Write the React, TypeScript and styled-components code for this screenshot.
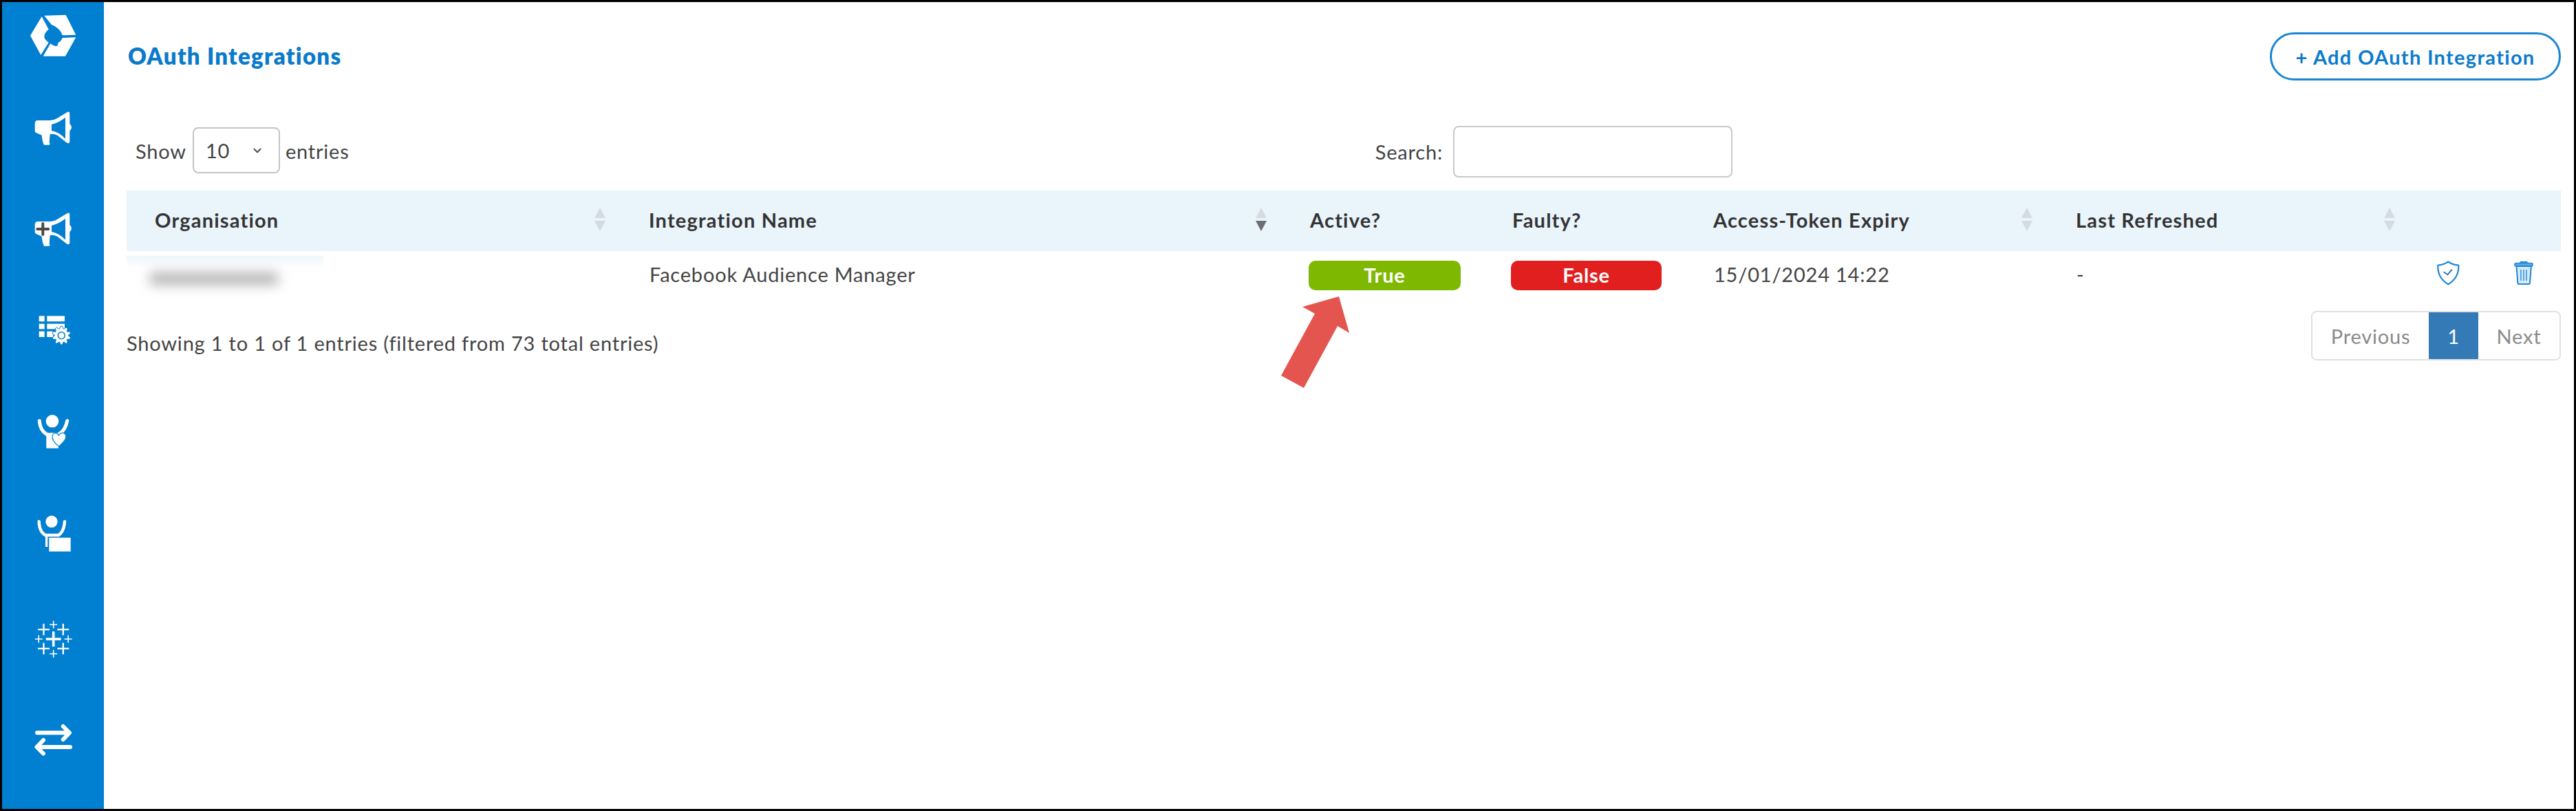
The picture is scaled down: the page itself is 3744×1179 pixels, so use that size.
import React, { FC } from "react";
import styled, { createGlobalStyle } from "styled-components";
import { ChevronDown } from "lucide-react";

const GlobalStyle = createGlobalStyle`
  html, body {
    margin: 0;
    padding: 0;
    background: #fff;
  }
  body {
    font-family: "Lato", "Liberation Sans", sans-serif;
    font-size: 29px;
    letter-spacing: 0.8px;
    color: #444;
  }
`;

const Frame = styled.div`
  position: relative;
  box-sizing: border-box;
  width: 3744px;
  height: 1179px;
  border: 3px solid #000;
  display: flex;
  background: #fff;
  overflow: hidden;
`;
const Sidebar = styled.aside`
  flex: 0 0 148px;
  background: #017fd0;
  padding-left: 24px;
  box-sizing: border-box;
`;
const LogoBox = styled.div`
  height: 98px;
  display: flex;
  align-items: center;
`;
const Nav = styled.nav`
  margin-top: 11px;
  display: flex;
  flex-direction: column;
`;
const NavItem = styled.a`
  display: flex;
  align-items: center;
  height: 148px;
`;
const Main = styled.main`
  flex: 1;
  min-width: 0;
  padding: 44px 19px 0 33px;
`;
const Header = styled.header`
  display: flex;
  align-items: center;
  justify-content: space-between;
  height: 70px;
`;
const Title = styled.h1`
  margin: 0 0 2px 2px;
  font-size: 33px;
  font-weight: 800;
  letter-spacing: 1.3px;
  color: #0a7bcb;
`;
const AddButton = styled.button`
  box-sizing: border-box;
  width: 423px;
  height: 70px;
  border: 3px solid #1a86d3;
  border-radius: 35px;
  background: #fff;
  color: #0a7bcb;
  font: 700 29px "Lato", "Liberation Sans", sans-serif;
  letter-spacing: 1.3px;
`;
const Toolbar = styled.div`
  display: flex;
  justify-content: space-between;
  align-items: center;
  height: 75px;
  margin: 66px 0 19px;
  padding: 0 1204px 0 13px;
`;
const LengthLabel = styled.label`
  display: flex;
  align-items: center;
  gap: 8px;
  padding-bottom: 3px;
`;
const LengthSelect = styled.div`
  box-sizing: border-box;
  width: 127px;
  height: 67px;
  margin: 0 0 1px 1px;
  border: 2px solid #c4c4c4;
  border-radius: 8px;
  display: flex;
  align-items: center;
  justify-content: space-between;
  padding: 0 22px 0 17px;
  color: #444;
`;
const SearchLabel = styled.label`
  display: flex;
  align-items: center;
  gap: 15px;
`;
const SearchInput = styled.input`
  box-sizing: border-box;
  width: 406px;
  height: 75px;
  border: 2px solid #c9c9c9;
  border-radius: 8px;
  background: #fff;
`;
const Table = styled.table`
  width: 3538px;
  table-layout: fixed;
  border-collapse: collapse;
`;
const Col = styled.col<{ $w: number }>`
  width: ${({ $w }) => $w}px;
`;
const HeadRow = styled.tr`
  height: 88px;
  background: #e9f4fb;
`;
const Th = styled.th`
  padding: 0 22px 4px 41px;
  font-weight: 700;
  letter-spacing: 1.2px;
  text-align: left;
  color: #333;
`;
const ThInner = styled.div`
  display: flex;
  align-items: center;
  justify-content: space-between;
`;
const Sort = styled.span`
  display: flex;
  flex-direction: column;
  gap: 4px;
`;
const Tri = styled.i<{ $up?: boolean; $active?: boolean }>`
  display: block;
  width: 0;
  height: 0;
  border-left: 8px solid transparent;
  border-right: 8px solid transparent;
  ${({ $up, $active }) =>
    `border-${$up ? "bottom" : "top"}: 15px solid ${$active ? "#6e6f70" : "#d4dbe2"};`}
`;
const BodyRow = styled.tr`
  height: 70px;
`;
const Td = styled.td`
  padding: 0 0 4px 42px;
  color: #444;
`;
const OrgCell = styled(Td)`
  background-image: linear-gradient(#edf6fc, #fff);
  background-repeat: no-repeat;
  background-size: 286px 18px;
  background-position: 0 7px;
`;
const Blurred = styled.span`
  display: block;
  width: 186px;
  height: 18px;
  margin-top: 13px;
  margin-left: -8px;
  background: #b3b3b3;
  filter: blur(9px);
`;
const BadgeCell = styled.td`
  padding: 0 34px 0 39px;
`;
const Badge = styled.div<{ $color: string }>`
  height: 43px;
  padding-bottom: 2px;
  box-sizing: border-box;
  border-radius: 10px;
  background: ${({ $color }) => $color};
  color: #fff;
  font-weight: 700;
  display: flex;
  align-items: center;
  justify-content: center;
`;
const ActionCell = styled.td`
  text-align: center;
  padding: 0;
`;
const Footer = styled.div`
  display: flex;
  justify-content: space-between;
  align-items: center;
  margin-top: 17px;
`;
const FooterInfo = styled.span`
  padding-top: 20px;
`;
const Pager = styled.div`
  box-sizing: border-box;
  height: 72px;
  display: flex;
  border: 2px solid #e0e0e0;
  border-radius: 8px;
  overflow: hidden;
`;
const PageLink = styled.a<{ $w: number; $current?: boolean }>`
  width: ${({ $w }) => $w}px;
  margin: ${({ $current }) => ($current ? "-2px 0" : "0")};
  display: flex;
  align-items: center;
  justify-content: center;
  background: ${({ $current }) => ($current ? "#337ab7" : "#fff")};
  color: ${({ $current }) => ($current ? "#fff" : "#8a8a8a")};
`;
const ArrowMark = styled.svg`
  position: absolute;
  left: 1856px;
  top: 428px;
`;

const WHITE = "#fff";
const BLUE = "#017fd0";
const MEGAPHONE =
  "M50.7 180Q50.7 175 55 175L71.7 175Q78 175 83.3 171.7L97 163.5Q101.3 161 101.3 165L101.3 180Q104 182 104 185Q104 188 101.3 190L101.3 205Q101.3 210 97 207.5L83.3 196.7Q78 194 72.7 195L71.7 206.7Q73.5 210.7 71 210.7L64 210.7Q61.5 206 60.7 196.7L55 194Q50.7 193 50.7 190ZM75 181L75 190Q86 192 95 201.7L95 170.7Q86 178 75 181Z";

const gear = (cx: number, cy: number, R: number, r: number, n: number) => {
  const pts: string[] = [];
  for (let i = 0; i < n; i++) {
    const a = (i / n) * Math.PI * 2;
    const w = Math.PI / n / 2.2;
    [
      [r, a - 2 * w],
      [R, a - w * 0.7],
      [R, a + w * 0.7],
      [r, a + 2 * w],
    ].forEach(([d, t]) => {
      pts.push(`${(cx + d * Math.sin(t)).toFixed(1)},${(cy - d * Math.cos(t)).toFixed(1)}`);
    });
  }
  return pts.join(" ");
};

const Icon: FC<{ y: number; children: React.ReactNode }> = ({ y, children }) => (
  <svg width="100" height="100" viewBox={`27 ${y} 100 100`} fill={WHITE}>
    {children}
  </svg>
);

const Logo = () => (
  <Icon y={2}>
    <path d="M64.3 22.7L95.7 21.7L110.3 50.7L90.7 51.3Q88 44 83.3 40.7Q79 37 75 36Z" />
    <path d="M60.7 24L44 51.7L59.3 80L70.7 61.7Q65 58 64.3 53.3Q65 47 70.7 42.7Z" />
    <path d="M110.3 54.3L95 81.7L62.7 81.7L73.3 63.3Q79 68 83.3 66.7Q84 64 85 61.7Q89 60 90.7 55Z" />
  </Icon>
);

const Megaphone = () => (
  <Icon y={136}>
    <path d={MEGAPHONE} fillRule="evenodd" />
  </Icon>
);

const MegaphonePlus = () => (
  <Icon y={284}>
    <path d={MEGAPHONE} fillRule="evenodd" transform="translate(0 147)" />
    <path d="M62.3 325V341M54.3 333H70.3" stroke="#4a4a4a" strokeWidth="4" strokeLinecap="round" />
  </Icon>
);

const TableGear = () => (
  <Icon y={432}>
    <rect x="56.7" y="459.3" width="8" height="8" />
    <rect x="68.3" y="459.3" width="25.7" height="8" />
    <rect x="56.7" y="470.7" width="8" height="7.7" />
    <rect x="68.3" y="470.7" width="25.7" height="7.7" />
    <rect x="56.7" y="481.7" width="8" height="8.3" />
    <rect x="68.3" y="481.7" width="9" height="8.3" />
    <polygon points={gear(89.3, 487.7, 13.5, 10, 10)} stroke={BLUE} strokeWidth="1" />
    <circle cx="89.3" cy="487.7" r="5" fill={WHITE} stroke={BLUE} strokeWidth="1.6" />
  </Icon>
);

const PersonHeart = () => (
  <Icon y={580}>
    <circle cx="76" cy="612.3" r="9.3" />
    <path d="M57.3 611.7Q58 626 68.3 631.7H85Q95 626 97.7 611.7" fill="none" stroke={WHITE} strokeWidth="5" strokeLinecap="round" />
    <path d="M67.3 630H85V651.7H67.3Z" />
    <path
      d="M85.5 649C78 643 75.5 638 76 634C77 629 83 628 85.5 633C88 628 95 628 96 634C96.5 640 90 645 85.5 649Z"
      stroke={BLUE}
      strokeWidth="1.2"
    />
  </Icon>
);

const PersonBox = () => (
  <Icon y={728}>
    <circle cx="75" cy="758.3" r="8.7" />
    <path d="M56.7 758.3Q57 773 66 778H85Q93 773 94 758.3" fill="none" stroke={WHITE} strokeWidth="4.5" strokeLinecap="round" />
    <rect x="66" y="776" width="3.3" height="19" />
    <rect x="69" y="776" width="16" height="4" />
    <rect x="71.3" y="781.7" width="31.4" height="20" />
  </Icon>
);

const plus = (x: number, y: number, h: number) => `M${x - h} ${y}H${x + h}M${x} ${y - h}V${y + h}`;

const TableauMark = () => (
  <Icon y={876}>
    <g stroke={WHITE} fill="none">
      <path d={plus(77.7, 929, 11)} strokeWidth="3.6" />
      <path
        d={[plus(63.5, 915.2, 8.4), plus(91.8, 915.2, 8.4), plus(63.5, 942.8, 8.4), plus(91.8, 942.8, 8.4)].join("")}
        strokeWidth="2.3"
      />
      <path
        d={[plus(77.7, 908, 5.5), plus(56.3, 929, 5.5), plus(99.1, 929, 5.5), plus(77.7, 950.5, 5.5)].join("")}
        strokeWidth="1.6"
      />
    </g>
  </Icon>
);

const Transfer = () => (
  <Icon y={1024}>
    <path d="M54 1065.3H100M91.8 1056L101 1065.3L91.8 1075" fill="none" stroke={WHITE} strokeWidth="6" strokeLinecap="round" strokeLinejoin="round" />
    <path d="M102 1086H56M63 1076L53.5 1086L63 1095.5" fill="none" stroke={WHITE} strokeWidth="6" strokeLinecap="round" strokeLinejoin="round" />
  </Icon>
);

const ShieldCheck = () => (
  <svg width="40" height="44" viewBox="3539 380 40 44" fill="none" stroke="#2288d6" strokeLinecap="round" strokeLinejoin="round">
    <path d="M3559.3 385.5Q3566 390 3574.3 390.7Q3575 409 3559.3 418.3Q3543.5 409 3544.3 390.7Q3552.5 390 3559.3 385.5Z" strokeWidth="2.2" />
    <path d="M3553.3 400.7L3558.3 404.3L3564.3 397.3" strokeWidth="2" stroke="#3a6ea5" />
  </svg>
);

const TrashCan = () => (
  <svg width="40" height="44" viewBox="3647 380 40 44" fill="none" stroke="#2288d6" strokeLinejoin="round">
    <rect x="3662" y="385.5" width="10" height="3" fill="#2288d6" />
    <rect x="3654" y="387.5" width="26" height="4.4" rx="2" fill="#5aaae6" strokeWidth="1.6" />
    <path d="M3656.5 392H3677.8L3676 416.5Q3675.8 418 3674 418H3660.3Q3658.5 418 3658.3 416.5Z" fill="#d6eafa" strokeWidth="2" />
    <path d="M3663 397V413M3667 397V413M3671 397V413" stroke="#2288d6" strokeWidth="1.4" />
  </svg>
);

const SortMark: FC<{ active?: boolean }> = ({ active }) => (
  <Sort>
    <Tri $up />
    <Tri $active={active} />
  </Sort>
);

export default function App() {
  return (
    <Frame>
      <GlobalStyle />
      <Sidebar>
        <LogoBox>
          <Logo />
        </LogoBox>
        <Nav>
          <NavItem><Megaphone /></NavItem>
          <NavItem><MegaphonePlus /></NavItem>
          <NavItem><TableGear /></NavItem>
          <NavItem><PersonHeart /></NavItem>
          <NavItem><PersonBox /></NavItem>
          <NavItem><TableauMark /></NavItem>
          <NavItem><Transfer /></NavItem>
        </Nav>
      </Sidebar>
      <Main>
        <Header>
          <Title>OAuth Integrations</Title>
          <AddButton>+ Add OAuth Integration</AddButton>
        </Header>
        <Toolbar>
          <LengthLabel>
            Show
            <LengthSelect>
              10
              <ChevronDown size={18} strokeWidth={3} color="#555" />
            </LengthSelect>
            entries
          </LengthLabel>
          <SearchLabel>
            Search:
            <SearchInput type="search" />
          </SearchLabel>
        </Toolbar>
        <Table>
          <colgroup>
            <Col $w={718} />
            <Col $w={961} />
            <Col $w={294} />
            <Col $w={292} />
            <Col $w={527} />
            <Col $w={527} />
            <Col $w={110} />
            <Col $w={109} />
          </colgroup>
          <thead>
            <HeadRow>
              <Th><ThInner>Organisation<SortMark /></ThInner></Th>
              <Th><ThInner>Integration Name<SortMark active /></ThInner></Th>
              <Th>Active?</Th>
              <Th>Faulty?</Th>
              <Th><ThInner>Access-Token Expiry<SortMark /></ThInner></Th>
              <Th><ThInner>Last Refreshed<SortMark /></ThInner></Th>
              <Th />
              <Th />
            </HeadRow>
          </thead>
          <tbody>
            <BodyRow>
              <OrgCell><Blurred /></OrgCell>
              <Td>Facebook Audience Manager</Td>
              <BadgeCell><Badge $color="#7fb800">True</Badge></BadgeCell>
              <BadgeCell><Badge $color="#e11f1f">False</Badge></BadgeCell>
              <Td>15/01/2024 14:22</Td>
              <Td>-</Td>
              <ActionCell><ShieldCheck /></ActionCell>
              <ActionCell><TrashCan /></ActionCell>
            </BodyRow>
          </tbody>
        </Table>
        <Footer>
          <FooterInfo>Showing 1 to 1 of 1 entries (filtered from 73 total entries)</FooterInfo>
          <Pager>
            <PageLink $w={169}>Previous</PageLink>
            <PageLink $w={72} $current>1</PageLink>
            <PageLink $w={118}>Next</PageLink>
          </Pager>
        </Footer>
      </Main>
      <ArrowMark width="110" height="140" viewBox="1859 431 110 140">
        <polygon
          points="1946,431 1893,446 1911,456 1862,546 1895,564 1944,474 1961,484"
          fill="#e5554f"
        />
      </ArrowMark>
    </Frame>
  );
}
